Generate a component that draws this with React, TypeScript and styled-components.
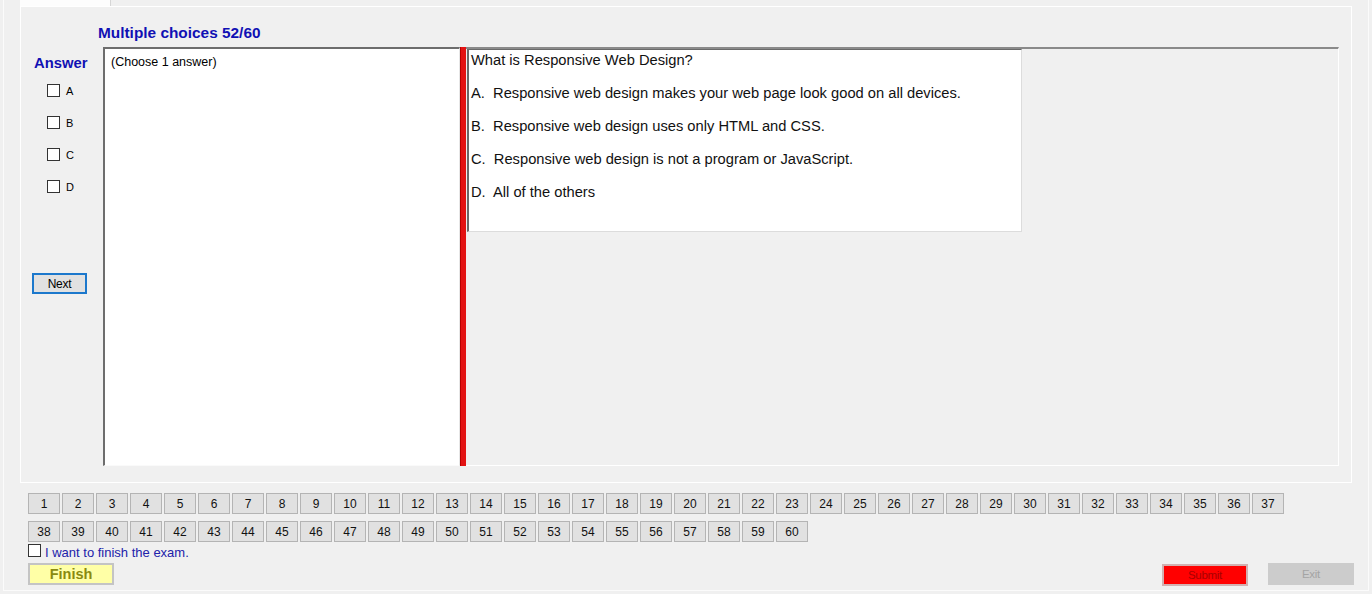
import React from 'react';
import styled, { createGlobalStyle } from 'styled-components';

const Global = createGlobalStyle`
  html, body { margin: 0; padding: 0; background: #f0f0f0; }
  body { font-family: "Liberation Sans", Arial, sans-serif; color: #000; }
  * { box-sizing: border-box; }
`;

const Window = styled.div`
  margin-left: 3px;
  width: 1366px;
  height: 591px;
  border: 1px solid #fbfbfb;
  border-top: none;
  display: flex;
  flex-direction: column;
`;

const TabControl = styled.div`
  margin-left: 16px;
  width: 1332px;
  display: flex;
  flex-direction: column;
`;

const TabStrip = styled.div`
  height: 6px;
  display: flex;
`;

const Tab = styled.div`
  width: 91px;
  height: 6px;
  background: #fdfdfd;
  border-right: 1px solid #d6d6d6;
`;

const TabPage = styled.div`
  height: 477px;
  border: 1px solid #ffffff;
  display: grid;
  grid-template-columns: 82px 1236px;
  grid-template-rows: 40px 419px;
`;

const Title = styled.div`
  grid-column: 1 / 3;
  align-self: end;
  margin-bottom: 6px;
  padding-left: 77px;
  font-size: 15.4px;
  line-height: 17px;
  font-weight: bold;
  color: #1010b4;
`;

const AnswerColumn = styled.div`
  display: flex;
  flex-direction: column;
  align-items: flex-start;
  padding-left: 13px;
`;

const AnswerLabel = styled.div`
  margin-top: 8px;
  font-size: 14.8px;
  line-height: 17px;
  font-weight: bold;
  color: #1010b4;
`;

const CheckRow = styled.label<{ $first?: boolean }>`
  display: flex;
  align-items: center;
  height: 13px;
  margin-left: 13px;
  margin-top: ${(p) => (p.$first ? '12px' : '19px')};
  font-size: 11px;
  gap: 6px;
`;

const Box = styled.span`
  display: inline-block;
  width: 13px;
  height: 13px;
  border: 1px solid #333;
  background: #fff;
`;

const NextButton = styled.button`
  margin-top: 80px;
  margin-left: -2px;
  width: 55px;
  height: 21px;
  padding: 0;
  border: 2px solid #1c78cc;
  background: #e1e1e1;
  font-family: "Liberation Sans", Arial, sans-serif;
  font-size: 12px;
  color: #000;
  letter-spacing: -0.3px;
`;

const Panel = styled.div`
  display: flex;
  height: 419px;
`;

const LeftText = styled.div`
  width: 357px;
  background: #fff;
  border-top: 2px solid #6d6d6d;
  border-left: 2px solid #6d6d6d;
  border-right: 1px solid #e6e6e6;
  border-bottom: 1px solid #fafafa;
  padding: 6px 0 0 6px;
  font-size: 12.5px;
  line-height: 15px;
`;

const Splitter = styled.div`
  width: 6px;
  background: #e31313;
  border-left: 1px solid #b80000;
`;

const RightPane = styled.div`
  flex: 1;
  background: #f0f0f0;
  border-top: 2px solid #8a8a8a;
  border-right: 1px solid #ffffff;
  border-bottom: 1px solid #ffffff;
  padding-left: 1px;
`;

const QuestionBox = styled.div`
  width: 555px;
  height: 183px;
  background: #fff;
  border-left: 2px solid #6a6a6a;
  border-top: 1px solid #6a6a6a;
  border-right: 1px solid #dcdcdc;
  border-bottom: 1px solid #dcdcdc;
  padding: 2px 0 0 2px;
`;

const QLine = styled.div`
  font-size: 14.7px;
  line-height: 17px;
  margin-bottom: 16px;
  white-space: pre;
  color: #111;
`;

const NumGrid = styled.div`
  margin: 10px 0 0 24px;
  width: 1258px;
  display: flex;
  flex-wrap: wrap;
  column-gap: 2px;
  row-gap: 7px;
`;

const NumButton = styled.button`
  width: 32px;
  height: 21px;
  padding: 0;
  border: 1px solid #b4b4b4;
  background: #e1e1e1;
  font-family: "Liberation Sans", Arial, sans-serif;
  font-size: 12px;
  color: #111;
`;

const FinishCheck = styled.label`
  margin: 2px 0 0 24px;
  display: flex;
  align-items: center;
  height: 13px;
  gap: 4px;
  font-size: 13px;
  line-height: 13px;
  color: #2222aa;
  span + & {
    margin: 0;
  }
`;

const FinishText = styled.span`
  margin-top: 3px;
`;

const BottomRow = styled.div`
  margin: 6px 14px 0 24px;
  display: flex;
  justify-content: space-between;
  align-items: flex-start;
`;

const RightGroup = styled.div`
  display: flex;
  gap: 20px;
  align-items: flex-start;
`;

const FinishButton = styled.button`
  width: 86px;
  height: 22px;
  padding: 0 0 1px;
  border: 2px solid #c4c4c4;
  background: #ffffa6;
  font-family: "Liberation Sans", Arial, sans-serif;
  font-size: 14.5px;
  font-weight: bold;
  color: #8a8a10;
`;

const SubmitButton = styled.button`
  margin-top: 1px;
  width: 86px;
  height: 22px;
  padding: 0;
  border: 2px solid #d2b0b0;
  background: #ff0000;
  font-family: "Liberation Sans", Arial, sans-serif;
  font-size: 11.5px;
  color: #a80000;
  letter-spacing: -0.3px;
`;

const ExitButton = styled.button`
  width: 86px;
  height: 22px;
  padding: 0;
  border: 1px solid #cccccc;
  background: #cccccc;
  font-family: "Liberation Sans", Arial, sans-serif;
  font-size: 11.5px;
  color: #a4a4a4;
  letter-spacing: -0.3px;
`;

const options = ['A', 'B', 'C', 'D'];
const lines = [
  'What is Responsive Web Design?',
  'A.  Responsive web design makes your web page look good on all devices.',
  'B.  Responsive web design uses only HTML and CSS.',
  'C.  Responsive web design is not a program or JavaScript.',
  'D.  All of the others',
];

export default function App() {
  const nums = Array.from({ length: 60 }, (_, i) => i + 1);
  return (
    <>
      <Global />
      <Window>
        <TabControl>
          <TabStrip>
            <Tab />
          </TabStrip>
          <TabPage>
            <Title>Multiple choices 52/60</Title>
            <AnswerColumn>
              <AnswerLabel>Answer</AnswerLabel>
              {options.map((o, i) => (
                <CheckRow key={o} $first={i === 0}>
                  <Box />
                  {o}
                </CheckRow>
              ))}
              <NextButton>Next</NextButton>
            </AnswerColumn>
            <Panel>
              <LeftText>(Choose 1 answer)</LeftText>
              <Splitter />
              <RightPane>
                <QuestionBox>
                  {lines.map((l) => (
                    <QLine key={l}>{l}</QLine>
                  ))}
                </QuestionBox>
              </RightPane>
            </Panel>
          </TabPage>
        </TabControl>
        <NumGrid>
          {nums.map((n) => (
            <NumButton key={n}>{n}</NumButton>
          ))}
        </NumGrid>
        <FinishCheck>
          <Box />
          <FinishText>I want to finish the exam.</FinishText>
        </FinishCheck>
        <BottomRow>
          <FinishButton>Finish</FinishButton>
          <RightGroup>
            <SubmitButton>Submit</SubmitButton>
            <ExitButton>Exit</ExitButton>
          </RightGroup>
        </BottomRow>
      </Window>
    </>
  );
}
